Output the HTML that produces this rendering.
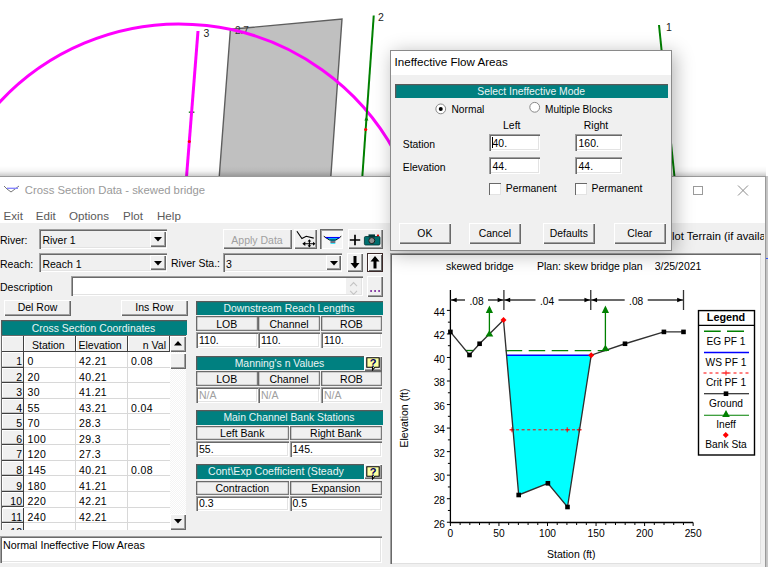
<!DOCTYPE html><html><head><meta charset="utf-8"><style>
html,body{margin:0;padding:0}
body{width:768px;height:567px;overflow:hidden;position:relative;background:#fff;font-family:"Liberation Sans", sans-serif}
.a{position:absolute;box-sizing:border-box}
.t{position:absolute;white-space:pre}
svg{position:absolute}
</style></head><body>
<svg style="left:0;top:0" width="768" height="180" viewBox="0 0 768 180">
<polygon points="230.4,29.3 342,19.1 330.8,177 219.2,177" fill="#c0c0c0" stroke="#5e5e5e" stroke-width="1.4"/>
<text x="235" y="34" font-family="Liberation Sans" font-size="10" fill="#333">2.7</text>
<path d="M-5,107.20 A245.66,245.66 0 0 1 395,152.17" fill="none" stroke="#ff00ff" stroke-width="3"/>
<line x1="188.8" y1="112.2" x2="194.4" y2="112.2" stroke="#1a801a" stroke-width="1.4"/>
<line x1="198" y1="31" x2="186.5" y2="177" stroke="#ff00ff" stroke-width="3"/>
<line x1="373.75" y1="15.5" x2="362.3" y2="177" stroke="#008000" stroke-width="2"/>
<line x1="659" y1="25" x2="674.5" y2="177" stroke="#008000" stroke-width="2"/>
<circle cx="365.7" cy="129.5" r="1.6" fill="#ff0000"/>
<circle cx="189.3" cy="141.5" r="1.5" fill="#ff0000"/>
<path d="M366.4,116.5 l2,4 h-4z" fill="#008000"/>
</svg>
<div class="t" style="left:203.4px;top:28.11px;font-size:10.5px;line-height:10.5px;color:#222;font-weight:400;">3</div>
<div class="t" style="left:378px;top:12.11px;font-size:10.5px;line-height:10.5px;color:#222;font-weight:400;">2</div>
<div class="t" style="left:666px;top:22.11px;font-size:10.5px;line-height:10.5px;color:#222;font-weight:400;">1</div>
<div class="a" style="left:0px;top:166px;width:766px;height:10px;background:linear-gradient(rgba(0,0,0,0), rgba(0,0,0,0.04) 50%, rgba(0,0,0,0.2));"></div>
<div class="a" style="left:766px;top:176px;width:10px;height:391px;background:linear-gradient(90deg,rgba(0,0,0,0.25),rgba(0,0,0,0.02));"></div>
<div class="a" style="left:-1px;top:176px;width:767px;height:404px;background:#f0f0f0;border:1px solid #9a9a9a;"></div>
<div class="a" style="left:0px;top:177px;width:765px;height:46.400000000000006px;background:#fff;"></div>
<svg style="left:3px;top:185px" width="17" height="10" viewBox="0 0 17 10">
<polyline points="1,1 4,4 8,7 12,4 16,1" fill="none" stroke="#777" stroke-width="1"/>
<line x1="4" y1="3.3" x2="15" y2="3.3" stroke="#8888ff" stroke-width="1.4"/>
</svg>
<div class="t" style="left:24.8px;top:185.43px;font-size:11.3px;line-height:11.3px;color:#9a9a9a;font-weight:400;">Cross Section Data - skewed bridge</div>
<div class="a" style="left:693px;top:186px;width:10px;height:9px;border:1px solid #9a9a9a;"></div>
<svg style="left:737px;top:185px" width="12" height="11" viewBox="0 0 12 11">
<path d="M1,0.5 L11,10.5 M11,0.5 L1,10.5" stroke="#8a8a8a" stroke-width="1"/></svg>
<div class="t" style="left:3.6px;top:209.68px;font-size:11.6px;line-height:11.6px;color:#5a5a5a;font-weight:400;">Exit</div>
<div class="t" style="left:35.8px;top:209.68px;font-size:11.6px;line-height:11.6px;color:#5a5a5a;font-weight:400;">Edit</div>
<div class="t" style="left:69px;top:209.68px;font-size:11.6px;line-height:11.6px;color:#5a5a5a;font-weight:400;">Options</div>
<div class="t" style="left:123px;top:209.68px;font-size:11.6px;line-height:11.6px;color:#5a5a5a;font-weight:400;">Plot</div>
<div class="t" style="left:157px;top:209.68px;font-size:11.6px;line-height:11.6px;color:#5a5a5a;font-weight:400;">Help</div>
<div class="t" style="left:0px;top:235.11px;font-size:10.5px;line-height:10.5px;color:#000;font-weight:400;">River:</div>
<div class="a" style="left:39px;top:229px;width:128px;height:20px;background:#f0f0f0;box-shadow:inset 1px 1px #a0a0a0, inset 2px 2px #696969, inset -1px -1px #fff, inset -2px -2px #e3e3e3;"></div>
<div class="t" style="left:42.4px;top:235.11px;font-size:10.5px;line-height:10.5px;color:#000;font-weight:400;">River 1</div>
<div class="a" style="left:150px;top:231px;width:16px;height:16px;background:#f0f0f0;box-shadow:inset 1px 1px #fff, inset -1px -1px #696969, inset -2px -2px #a0a0a0;"></div>
<svg style="left:154.0px;top:237.0px" width="8" height="5"><path d="M0,0 H8 L4,4.5z" fill="#000"/></svg>
<div class="t" style="left:0px;top:258.61px;font-size:10.5px;line-height:10.5px;color:#000;font-weight:400;">Reach:</div>
<div class="a" style="left:39px;top:253px;width:128px;height:19px;background:#f0f0f0;box-shadow:inset 1px 1px #a0a0a0, inset 2px 2px #696969, inset -1px -1px #fff, inset -2px -2px #e3e3e3;"></div>
<div class="t" style="left:42.4px;top:258.61px;font-size:10.5px;line-height:10.5px;color:#000;font-weight:400;">Reach 1</div>
<div class="a" style="left:150px;top:255px;width:16px;height:15px;background:#f0f0f0;box-shadow:inset 1px 1px #fff, inset -1px -1px #696969, inset -2px -2px #a0a0a0;"></div>
<svg style="left:154.0px;top:260.5px" width="8" height="5"><path d="M0,0 H8 L4,4.5z" fill="#000"/></svg>
<div class="t" style="left:171px;top:257.91px;font-size:10.5px;line-height:10.5px;color:#000;font-weight:400;">River Sta.:</div>
<div class="a" style="left:222.5px;top:253px;width:119.5px;height:19px;background:#f0f0f0;box-shadow:inset 1px 1px #a0a0a0, inset 2px 2px #696969, inset -1px -1px #fff, inset -2px -2px #e3e3e3;"></div>
<div class="t" style="left:226px;top:258.61px;font-size:10.5px;line-height:10.5px;color:#000;font-weight:400;">3</div>
<div class="a" style="left:326px;top:255px;width:15px;height:15px;background:#f0f0f0;box-shadow:inset 1px 1px #fff, inset -1px -1px #696969, inset -2px -2px #a0a0a0;"></div>
<svg style="left:329.5px;top:260.5px" width="8" height="5"><path d="M0,0 H8 L4,4.5z" fill="#000"/></svg>
<div class="a" style="left:222.5px;top:229px;width:69.0px;height:20px;background:#f0f0f0;box-shadow:inset 1px 1px #fff, inset -1px -1px #696969, inset -2px -2px #a0a0a0;"></div>
<div class="t" style="left:107px;width:300px;text-align:center;top:234.51px;font-size:10.5px;line-height:10.5px;color:#a0a0a0;font-weight:400;">Apply Data</div>
<div class="a" style="left:294px;top:229px;width:23px;height:20px;background:#f0f0f0;box-shadow:inset 1px 1px #fff, inset -1px -1px #696969, inset -2px -2px #a0a0a0;"></div>
<svg style="left:290px;top:225px" width="30" height="25" viewBox="290 225 30 25"><polyline points="296.9,231.25 301.9,238.5 306.25,236.25 313.75,238.1" fill="none" stroke="#000" stroke-width="1.1"/><path d="M304,243.75 H314 M309.4,240 V247" stroke="#000" stroke-width="1.1"/><path d="M302.3,243.75 l3,-2.2 v4.4z M315.5,243.75 l-2.5,-2 v4z M309.4,239.3 l-1.8,2.2 h3.6z M309.4,247.5 l-1.8,-2.2 h3.6z" fill="#000"/></svg>
<div class="a" style="left:320px;top:229px;width:23px;height:20px;background:#f6f6f6;box-shadow:inset 1px 1px #696969, inset 2px 2px #a0a0a0, inset -1px -1px #fff;"></div>
<svg style="left:320px;top:229px" width="23" height="20" viewBox="320 229 23 20"><path d="M325.6,237.5 L329.5,240 H330.5 V243.7 H335.3 V240 H336 L340,237.5z" fill="#00e0ff"/><path d="M330.5,242 H335.3" stroke="#e00000" stroke-width="1"/><polyline points="323.75,236.25 329.5,240 336,240 341.25,236.25" fill="none" stroke="#000" stroke-width="1"/><line x1="325.6" y1="237.6" x2="340" y2="237.6" stroke="#0000ff" stroke-width="1.3"/></svg>
<div class="a" style="left:347.5px;top:229px;width:35.5px;height:20px;background:#f0f0f0;box-shadow:inset 1px 1px #fff, inset -1px -1px #696969, inset -2px -2px #a0a0a0;"></div>
<svg style="left:347px;top:229px" width="36" height="20" viewBox="347 229 36 20"><path d="M355,234.8 V245.2 M349.8,240 H360.2" stroke="#000" stroke-width="1.7"/><rect x="364.4" y="236.5" width="15.6" height="8.5" rx="1.2" fill="#007070" stroke="#003030" stroke-width="0.8"/><rect x="368.5" y="234.4" width="6.5" height="3" fill="#003a3a"/><circle cx="371.8" cy="240.6" r="3" fill="#909090" stroke="#202020" stroke-width="1"/><rect x="377" y="234.6" width="2" height="1.5" fill="#e00000"/></svg>
<div class="a" style="left:347px;top:253px;width:16px;height:19px;background:#f0f0f0;box-shadow:inset 1px 1px #fff, inset -1px -1px #696969, inset -2px -2px #a0a0a0;"></div>
<svg style="left:350px;top:256px" width="10" height="13" viewBox="0 0 10 13"><path d="M3.5,0 H6.5 V7 H9.5 L5,12.5 L0.5,7 H3.5z" fill="#000"/></svg>
<div class="a" style="left:366.5px;top:253px;width:16.5px;height:19px;background:#f0f0f0;border:1px solid #3c2a2a;box-shadow:inset 1px 1px #fff, inset -1px -1px #696969;"></div>
<svg style="left:370px;top:256px" width="10" height="13" viewBox="0 0 10 13"><path d="M3.5,12.5 H6.5 V5.5 H9.5 L5,0 L0.5,5.5 H3.5z" fill="#000"/></svg>
<div class="t" style="left:0px;top:282.11px;font-size:10.5px;line-height:10.5px;color:#000;font-weight:400;">Description</div>
<div class="a" style="left:70.5px;top:276px;width:292.5px;height:19.5px;background:#fff;box-shadow:inset 1px 1px #a0a0a0, inset 2px 2px #696969, inset -1px -1px #fff, inset -2px -2px #e3e3e3;"></div>
<div class="a" style="left:346.4px;top:278px;width:15.100000000000023px;height:16px;background:#f0f0f0;"></div>
<svg style="left:346px;top:278px" width="16" height="17" viewBox="346 278 16 17"><path d="M350.2,286.2 L353.6,282.6 L357,286.2 M350.2,290.8 L353.6,294.4 L357,290.8" fill="none" stroke="#c4c4c4" stroke-width="1.1"/></svg>
<div class="a" style="left:367px;top:276px;width:16px;height:20.5px;background:#f0f0f0;box-shadow:inset 1px 1px #fff, inset -1px -1px #696969, inset -2px -2px #a0a0a0;"></div>
<svg style="left:367px;top:276px" width="16" height="20" viewBox="367 276 16 20"><rect x="370.3" y="290" width="1.6" height="2" fill="#8030a0"/><rect x="374.3" y="290" width="1.6" height="2" fill="#8030a0"/><rect x="378.3" y="290" width="1.6" height="2" fill="#8030a0"/></svg>
<div class="a" style="left:4px;top:300px;width:67px;height:16px;background:#f0f0f0;box-shadow:inset 1px 1px #fff, inset -1px -1px #696969, inset -2px -2px #a0a0a0;"></div>
<div class="t" style="left:-112.5px;width:300px;text-align:center;top:302.41px;font-size:10.5px;line-height:10.5px;color:#000;font-weight:400;">Del Row</div>
<div class="a" style="left:121px;top:300px;width:66.5px;height:16px;background:#f0f0f0;box-shadow:inset 1px 1px #fff, inset -1px -1px #696969, inset -2px -2px #a0a0a0;"></div>
<div class="t" style="left:4.25px;width:300px;text-align:center;top:302.41px;font-size:10.5px;line-height:10.5px;color:#000;font-weight:400;">Ins Row</div>
<div class="a" style="left:1px;top:320px;width:185.5px;height:15.0px;background:#008080;box-shadow:inset 1.3px 1.3px #5a5a5a;"></div>
<div class="t" style="left:-56.5px;width:300px;text-align:center;top:323.54px;font-size:10.4px;line-height:10.4px;color:#eaf4f4;font-weight:400;">Cross Section Coordinates</div>
<div class="a" style="left:1px;top:334.5px;width:185px;height:195.5px;background:#fff;box-shadow:inset 1px 1px #696969, inset 2px 2px #a0a0a0;"></div>
<div class="a" style="left:2px;top:336px;width:22px;height:16px;background:#f0f0f0;box-shadow:inset -1px -1px #404040, inset 1px 1px #fff;"></div>
<div class="a" style="left:24px;top:336px;width:51.5px;height:16px;background:#f0f0f0;box-shadow:inset -1px -1px #404040, inset 1px 1px #fff;"></div>
<div class="t" style="left:32px;top:339.61px;font-size:10.5px;line-height:10.5px;color:#000;font-weight:400;">Station</div>
<div class="a" style="left:75.5px;top:336px;width:52.0px;height:16px;background:#f0f0f0;box-shadow:inset -1px -1px #404040, inset 1px 1px #fff;"></div>
<div class="t" style="left:78.5px;top:339.61px;font-size:10.5px;line-height:10.5px;color:#000;font-weight:400;">Elevation</div>
<div class="a" style="left:127.5px;top:336px;width:42.5px;height:16px;background:#f0f0f0;box-shadow:inset -1px -1px #404040, inset 1px 1px #fff;"></div>
<div class="t" style="left:-134px;width:300px;text-align:right;top:339.61px;font-size:10.5px;line-height:10.5px;color:#000;font-weight:400;">n Val</div>
<div class="a" style="left:0;top:352px;width:186px;height:178px;overflow:hidden">
<div class="a" style="left:2px;top:0.0px;width:22px;height:15.55px;background:#f0f0f0;box-shadow:inset -1px -1.3px #404040, inset 1px 1px #fff;"></div>
<div class="t" style="left:-278px;width:300px;text-align:right;top:4.11px;font-size:10.5px;line-height:10.5px;color:#000;font-weight:400;">1</div>
<div class="a" style="left:24px;top:14.55px;width:146px;height:1.0px;background:#d8d8d8;"></div>
<div class="a" style="left:74.5px;top:0.0px;width:1.0px;height:15.55px;background:#d8d8d8;"></div>
<div class="a" style="left:126.5px;top:0.0px;width:1.0px;height:15.55px;background:#d8d8d8;"></div>
<div class="t" style="left:27.5px;top:4.11px;font-size:10.5px;line-height:10.5px;color:#000;font-weight:400;letter-spacing:0.35px">0</div>
<div class="t" style="left:79.0px;top:4.11px;font-size:10.5px;line-height:10.5px;color:#000;font-weight:400;letter-spacing:0.35px">42.21</div>
<div class="t" style="left:131.0px;top:4.11px;font-size:10.5px;line-height:10.5px;color:#000;font-weight:400;letter-spacing:0.35px">0.08</div>
<div class="a" style="left:2px;top:15.55px;width:22px;height:15.55px;background:#f0f0f0;box-shadow:inset -1px -1.3px #404040, inset 1px 1px #fff;"></div>
<div class="t" style="left:-278px;width:300px;text-align:right;top:19.66px;font-size:10.5px;line-height:10.5px;color:#000;font-weight:400;">2</div>
<div class="a" style="left:24px;top:30.1px;width:146px;height:1.0px;background:#d8d8d8;"></div>
<div class="a" style="left:74.5px;top:15.55px;width:1.0px;height:15.55px;background:#d8d8d8;"></div>
<div class="a" style="left:126.5px;top:15.55px;width:1.0px;height:15.55px;background:#d8d8d8;"></div>
<div class="t" style="left:27.5px;top:19.66px;font-size:10.5px;line-height:10.5px;color:#000;font-weight:400;letter-spacing:0.35px">20</div>
<div class="t" style="left:79.0px;top:19.66px;font-size:10.5px;line-height:10.5px;color:#000;font-weight:400;letter-spacing:0.35px">40.21</div>
<div class="a" style="left:2px;top:31.1px;width:22px;height:15.550000000000004px;background:#f0f0f0;box-shadow:inset -1px -1.3px #404040, inset 1px 1px #fff;"></div>
<div class="t" style="left:-278px;width:300px;text-align:right;top:35.21px;font-size:10.5px;line-height:10.5px;color:#000;font-weight:400;">3</div>
<div class="a" style="left:24px;top:45.650000000000006px;width:146px;height:1.0px;background:#d8d8d8;"></div>
<div class="a" style="left:74.5px;top:31.1px;width:1.0px;height:15.550000000000004px;background:#d8d8d8;"></div>
<div class="a" style="left:126.5px;top:31.1px;width:1.0px;height:15.550000000000004px;background:#d8d8d8;"></div>
<div class="t" style="left:27.5px;top:35.21px;font-size:10.5px;line-height:10.5px;color:#000;font-weight:400;letter-spacing:0.35px">30</div>
<div class="t" style="left:79.0px;top:35.21px;font-size:10.5px;line-height:10.5px;color:#000;font-weight:400;letter-spacing:0.35px">41.21</div>
<div class="a" style="left:2px;top:46.650000000000006px;width:22px;height:15.549999999999997px;background:#f0f0f0;box-shadow:inset -1px -1.3px #404040, inset 1px 1px #fff;"></div>
<div class="t" style="left:-278px;width:300px;text-align:right;top:50.76px;font-size:10.5px;line-height:10.5px;color:#000;font-weight:400;">4</div>
<div class="a" style="left:24px;top:61.2px;width:146px;height:1.0px;background:#d8d8d8;"></div>
<div class="a" style="left:74.5px;top:46.650000000000006px;width:1.0px;height:15.549999999999997px;background:#d8d8d8;"></div>
<div class="a" style="left:126.5px;top:46.650000000000006px;width:1.0px;height:15.549999999999997px;background:#d8d8d8;"></div>
<div class="t" style="left:27.5px;top:50.76px;font-size:10.5px;line-height:10.5px;color:#000;font-weight:400;letter-spacing:0.35px">55</div>
<div class="t" style="left:79.0px;top:50.76px;font-size:10.5px;line-height:10.5px;color:#000;font-weight:400;letter-spacing:0.35px">43.21</div>
<div class="t" style="left:131.0px;top:50.76px;font-size:10.5px;line-height:10.5px;color:#000;font-weight:400;letter-spacing:0.35px">0.04</div>
<div class="a" style="left:2px;top:62.2px;width:22px;height:15.549999999999997px;background:#f0f0f0;box-shadow:inset -1px -1.3px #404040, inset 1px 1px #fff;"></div>
<div class="t" style="left:-278px;width:300px;text-align:right;top:66.31px;font-size:10.5px;line-height:10.5px;color:#000;font-weight:400;">5</div>
<div class="a" style="left:24px;top:76.75px;width:146px;height:1.0px;background:#d8d8d8;"></div>
<div class="a" style="left:74.5px;top:62.2px;width:1.0px;height:15.549999999999997px;background:#d8d8d8;"></div>
<div class="a" style="left:126.5px;top:62.2px;width:1.0px;height:15.549999999999997px;background:#d8d8d8;"></div>
<div class="t" style="left:27.5px;top:66.31px;font-size:10.5px;line-height:10.5px;color:#000;font-weight:400;letter-spacing:0.35px">70</div>
<div class="t" style="left:79.0px;top:66.31px;font-size:10.5px;line-height:10.5px;color:#000;font-weight:400;letter-spacing:0.35px">28.3</div>
<div class="a" style="left:2px;top:77.75px;width:22px;height:15.549999999999997px;background:#f0f0f0;box-shadow:inset -1px -1.3px #404040, inset 1px 1px #fff;"></div>
<div class="t" style="left:-278px;width:300px;text-align:right;top:81.86px;font-size:10.5px;line-height:10.5px;color:#000;font-weight:400;">6</div>
<div class="a" style="left:24px;top:92.3px;width:146px;height:1.0px;background:#d8d8d8;"></div>
<div class="a" style="left:74.5px;top:77.75px;width:1.0px;height:15.549999999999997px;background:#d8d8d8;"></div>
<div class="a" style="left:126.5px;top:77.75px;width:1.0px;height:15.549999999999997px;background:#d8d8d8;"></div>
<div class="t" style="left:27.5px;top:81.86px;font-size:10.5px;line-height:10.5px;color:#000;font-weight:400;letter-spacing:0.35px">100</div>
<div class="t" style="left:79.0px;top:81.86px;font-size:10.5px;line-height:10.5px;color:#000;font-weight:400;letter-spacing:0.35px">29.3</div>
<div class="a" style="left:2px;top:93.30000000000001px;width:22px;height:15.549999999999997px;background:#f0f0f0;box-shadow:inset -1px -1.3px #404040, inset 1px 1px #fff;"></div>
<div class="t" style="left:-278px;width:300px;text-align:right;top:97.41px;font-size:10.5px;line-height:10.5px;color:#000;font-weight:400;">7</div>
<div class="a" style="left:24px;top:107.85000000000001px;width:146px;height:1.0px;background:#d8d8d8;"></div>
<div class="a" style="left:74.5px;top:93.30000000000001px;width:1.0px;height:15.549999999999997px;background:#d8d8d8;"></div>
<div class="a" style="left:126.5px;top:93.30000000000001px;width:1.0px;height:15.549999999999997px;background:#d8d8d8;"></div>
<div class="t" style="left:27.5px;top:97.41px;font-size:10.5px;line-height:10.5px;color:#000;font-weight:400;letter-spacing:0.35px">120</div>
<div class="t" style="left:79.0px;top:97.41px;font-size:10.5px;line-height:10.5px;color:#000;font-weight:400;letter-spacing:0.35px">27.3</div>
<div class="a" style="left:2px;top:108.85000000000001px;width:22px;height:15.549999999999997px;background:#f0f0f0;box-shadow:inset -1px -1.3px #404040, inset 1px 1px #fff;"></div>
<div class="t" style="left:-278px;width:300px;text-align:right;top:112.96px;font-size:10.5px;line-height:10.5px;color:#000;font-weight:400;">8</div>
<div class="a" style="left:24px;top:123.4px;width:146px;height:1.0px;background:#d8d8d8;"></div>
<div class="a" style="left:74.5px;top:108.85000000000001px;width:1.0px;height:15.549999999999997px;background:#d8d8d8;"></div>
<div class="a" style="left:126.5px;top:108.85000000000001px;width:1.0px;height:15.549999999999997px;background:#d8d8d8;"></div>
<div class="t" style="left:27.5px;top:112.96px;font-size:10.5px;line-height:10.5px;color:#000;font-weight:400;letter-spacing:0.35px">145</div>
<div class="t" style="left:79.0px;top:112.96px;font-size:10.5px;line-height:10.5px;color:#000;font-weight:400;letter-spacing:0.35px">40.21</div>
<div class="t" style="left:131.0px;top:112.96px;font-size:10.5px;line-height:10.5px;color:#000;font-weight:400;letter-spacing:0.35px">0.08</div>
<div class="a" style="left:2px;top:124.4px;width:22px;height:15.550000000000011px;background:#f0f0f0;box-shadow:inset -1px -1.3px #404040, inset 1px 1px #fff;"></div>
<div class="t" style="left:-278px;width:300px;text-align:right;top:128.51px;font-size:10.5px;line-height:10.5px;color:#000;font-weight:400;">9</div>
<div class="a" style="left:24px;top:138.95000000000002px;width:146px;height:1.0px;background:#d8d8d8;"></div>
<div class="a" style="left:74.5px;top:124.4px;width:1.0px;height:15.550000000000011px;background:#d8d8d8;"></div>
<div class="a" style="left:126.5px;top:124.4px;width:1.0px;height:15.550000000000011px;background:#d8d8d8;"></div>
<div class="t" style="left:27.5px;top:128.51px;font-size:10.5px;line-height:10.5px;color:#000;font-weight:400;letter-spacing:0.35px">180</div>
<div class="t" style="left:79.0px;top:128.51px;font-size:10.5px;line-height:10.5px;color:#000;font-weight:400;letter-spacing:0.35px">41.21</div>
<div class="a" style="left:2px;top:139.95000000000002px;width:22px;height:15.550000000000011px;background:#f0f0f0;box-shadow:inset -1px -1.3px #404040, inset 1px 1px #fff;"></div>
<div class="t" style="left:-278px;width:300px;text-align:right;top:144.06px;font-size:10.5px;line-height:10.5px;color:#000;font-weight:400;">10</div>
<div class="a" style="left:24px;top:154.50000000000003px;width:146px;height:1.0px;background:#d8d8d8;"></div>
<div class="a" style="left:74.5px;top:139.95000000000002px;width:1.0px;height:15.550000000000011px;background:#d8d8d8;"></div>
<div class="a" style="left:126.5px;top:139.95000000000002px;width:1.0px;height:15.550000000000011px;background:#d8d8d8;"></div>
<div class="t" style="left:27.5px;top:144.06px;font-size:10.5px;line-height:10.5px;color:#000;font-weight:400;letter-spacing:0.35px">220</div>
<div class="t" style="left:79.0px;top:144.06px;font-size:10.5px;line-height:10.5px;color:#000;font-weight:400;letter-spacing:0.35px">42.21</div>
<div class="a" style="left:2px;top:155.5px;width:22px;height:15.550000000000011px;background:#f0f0f0;box-shadow:inset -1px -1.3px #404040, inset 1px 1px #fff;"></div>
<div class="t" style="left:-278px;width:300px;text-align:right;top:159.61px;font-size:10.5px;line-height:10.5px;color:#000;font-weight:400;">11</div>
<div class="a" style="left:24px;top:170.05px;width:146px;height:1.0px;background:#d8d8d8;"></div>
<div class="a" style="left:74.5px;top:155.5px;width:1.0px;height:15.550000000000011px;background:#d8d8d8;"></div>
<div class="a" style="left:126.5px;top:155.5px;width:1.0px;height:15.550000000000011px;background:#d8d8d8;"></div>
<div class="t" style="left:27.5px;top:159.61px;font-size:10.5px;line-height:10.5px;color:#000;font-weight:400;letter-spacing:0.35px">240</div>
<div class="t" style="left:79.0px;top:159.61px;font-size:10.5px;line-height:10.5px;color:#000;font-weight:400;letter-spacing:0.35px">42.21</div>
<div class="a" style="left:2px;top:171.05px;width:22px;height:15.550000000000011px;background:#f0f0f0;box-shadow:inset -1px -1.3px #404040, inset 1px 1px #fff;"></div>
<div class="t" style="left:-278px;width:300px;text-align:right;top:175.16px;font-size:10.5px;line-height:10.5px;color:#000;font-weight:400;">12</div>
<div class="a" style="left:24px;top:185.60000000000002px;width:146px;height:1.0px;background:#d8d8d8;"></div>
<div class="a" style="left:74.5px;top:171.05px;width:1.0px;height:15.550000000000011px;background:#d8d8d8;"></div>
<div class="a" style="left:126.5px;top:171.05px;width:1.0px;height:15.550000000000011px;background:#d8d8d8;"></div>
</div>
<div class="a" style="left:170px;top:352px;width:16px;height:178px;background:repeating-conic-gradient(#f4f4f4 0 25%, #fff 0 50%) 0 0/2px 2px;"></div>
<div class="a" style="left:170px;top:336px;width:16px;height:16px;background:#f0f0f0;box-shadow:inset 1px 1px #fff, inset -1px -1px #696969, inset -2px -2px #a0a0a0;"></div>
<svg style="left:174px;top:341px" width="8" height="5"><path d="M0,4.5 H8 L4,0z" fill="#000"/></svg>
<div class="a" style="left:170px;top:352.5px;width:16px;height:16.5px;background:#f0f0f0;box-shadow:inset 1px 1px #fff, inset -1px -1px #696969, inset -2px -2px #a0a0a0;"></div>
<div class="a" style="left:170px;top:513.5px;width:16px;height:16.5px;background:#f0f0f0;box-shadow:inset 1px 1px #fff, inset -1px -1px #696969, inset -2px -2px #a0a0a0;"></div>
<svg style="left:174px;top:519px" width="8" height="5"><path d="M0,0 H8 L4,4.5z" fill="#000"/></svg>
<div class="a" style="left:0px;top:536.3px;width:382.4px;height:26.700000000000045px;background:#fff;box-shadow:inset 1px 1px #a0a0a0, inset 2px 2px #696969, inset -1px -1px #fff, inset -2px -2px #e3e3e3;"></div>
<div class="t" style="left:3px;top:540.44px;font-size:10.7px;line-height:10.7px;color:#000;font-weight:400;">Normal Ineffective Flow Areas</div>
<div class="a" style="left:196px;top:300.5px;width:186.5px;height:14.0px;background:#008080;box-shadow:inset 1.3px 1.3px #5a5a5a;"></div>
<div class="t" style="left:139.0px;width:300px;text-align:center;top:303.54px;font-size:10.4px;line-height:10.4px;color:#eaf4f4;font-weight:400;">Downstream Reach Lengths</div>
<div class="a" style="left:196px;top:316px;width:61.5px;height:14.5px;background:#f0f0f0;box-shadow:inset 1.3px 1.3px #6a6a6a, inset -1.2px -1.2px #7a7a7a;"></div>
<div class="t" style="left:76.75px;width:300px;text-align:center;top:318.69px;font-size:10.5px;line-height:10.5px;color:#000;font-weight:400;">LOB</div>
<div class="a" style="left:196px;top:332px;width:61.5px;height:16px;background:#fff;box-shadow:inset 1px 1px #a0a0a0, inset 2px 2px #696969, inset -1px -1px #fff, inset -2px -2px #e3e3e3;"></div>
<div class="t" style="left:199px;top:334.94px;font-size:10.5px;line-height:10.5px;color:#000;font-weight:400;">110.</div>
<div class="a" style="left:258px;top:316px;width:62px;height:14.5px;background:#f0f0f0;box-shadow:inset 1.3px 1.3px #6a6a6a, inset -1.2px -1.2px #7a7a7a;"></div>
<div class="t" style="left:139.0px;width:300px;text-align:center;top:318.69px;font-size:10.5px;line-height:10.5px;color:#000;font-weight:400;">Channel</div>
<div class="a" style="left:258px;top:332px;width:62px;height:16px;background:#fff;box-shadow:inset 1px 1px #a0a0a0, inset 2px 2px #696969, inset -1px -1px #fff, inset -2px -2px #e3e3e3;"></div>
<div class="t" style="left:261px;top:334.94px;font-size:10.5px;line-height:10.5px;color:#000;font-weight:400;">110.</div>
<div class="a" style="left:321px;top:316px;width:61px;height:14.5px;background:#f0f0f0;box-shadow:inset 1.3px 1.3px #6a6a6a, inset -1.2px -1.2px #7a7a7a;"></div>
<div class="t" style="left:201.5px;width:300px;text-align:center;top:318.69px;font-size:10.5px;line-height:10.5px;color:#000;font-weight:400;">ROB</div>
<div class="a" style="left:321px;top:332px;width:61px;height:16px;background:#fff;box-shadow:inset 1px 1px #a0a0a0, inset 2px 2px #696969, inset -1px -1px #fff, inset -2px -2px #e3e3e3;"></div>
<div class="t" style="left:324px;top:334.94px;font-size:10.5px;line-height:10.5px;color:#000;font-weight:400;">110.</div>
<div class="a" style="left:196px;top:355.5px;width:167.5px;height:14.5px;background:#008080;box-shadow:inset 1.3px 1.3px #5a5a5a;"></div>
<div class="t" style="left:129.5px;width:300px;text-align:center;top:358.79px;font-size:10.4px;line-height:10.4px;color:#eaf4f4;font-weight:400;">Manning&#39;s n Values</div>
<div class="a" style="left:364px;top:355.5px;width:18px;height:15.0px;background:#f0f0f0;box-shadow:inset 1px 1px #fff, inset -1px -1px #696969, inset -2px -2px #a0a0a0;"></div>
<svg style="left:366px;top:357.0px" width="15" height="14" viewBox="0 0 15 14"><path d="M0.8,0.8 H13.2 V10.2 H9 L6.5,13 V10.2 H0.8z" fill="#ffffa0" stroke="#000" stroke-width="1.1"/><text x="7" y="9.6" font-size="11" font-weight="700" text-anchor="middle" fill="#000060" font-family="Liberation Sans">?</text></svg>
<div class="a" style="left:196px;top:371px;width:61.5px;height:14.5px;background:#f0f0f0;box-shadow:inset 1.3px 1.3px #6a6a6a, inset -1.2px -1.2px #7a7a7a;"></div>
<div class="t" style="left:76.75px;width:300px;text-align:center;top:373.69px;font-size:10.5px;line-height:10.5px;color:#000;font-weight:400;">LOB</div>
<div class="a" style="left:196px;top:387px;width:61.5px;height:15.5px;background:#fff;box-shadow:inset 1px 1px #a0a0a0, inset 2px 2px #696969, inset -1px -1px #fff, inset -2px -2px #e3e3e3;"></div>
<div class="t" style="left:199px;top:389.69px;font-size:10.5px;line-height:10.5px;color:#a0a0a0;font-weight:400;">N/A</div>
<div class="a" style="left:258px;top:371px;width:62px;height:14.5px;background:#f0f0f0;box-shadow:inset 1.3px 1.3px #6a6a6a, inset -1.2px -1.2px #7a7a7a;"></div>
<div class="t" style="left:139.0px;width:300px;text-align:center;top:373.69px;font-size:10.5px;line-height:10.5px;color:#000;font-weight:400;">Channel</div>
<div class="a" style="left:258px;top:387px;width:62px;height:15.5px;background:#fff;box-shadow:inset 1px 1px #a0a0a0, inset 2px 2px #696969, inset -1px -1px #fff, inset -2px -2px #e3e3e3;"></div>
<div class="t" style="left:261px;top:389.69px;font-size:10.5px;line-height:10.5px;color:#a0a0a0;font-weight:400;">N/A</div>
<div class="a" style="left:321px;top:371px;width:61px;height:14.5px;background:#f0f0f0;box-shadow:inset 1.3px 1.3px #6a6a6a, inset -1.2px -1.2px #7a7a7a;"></div>
<div class="t" style="left:201.5px;width:300px;text-align:center;top:373.69px;font-size:10.5px;line-height:10.5px;color:#000;font-weight:400;">ROB</div>
<div class="a" style="left:321px;top:387px;width:61px;height:15.5px;background:#fff;box-shadow:inset 1px 1px #a0a0a0, inset 2px 2px #696969, inset -1px -1px #fff, inset -2px -2px #e3e3e3;"></div>
<div class="t" style="left:324px;top:389.69px;font-size:10.5px;line-height:10.5px;color:#a0a0a0;font-weight:400;">N/A</div>
<div class="a" style="left:196px;top:410px;width:186.5px;height:14.5px;background:#008080;box-shadow:inset 1.3px 1.3px #5a5a5a;"></div>
<div class="t" style="left:139.0px;width:300px;text-align:center;top:413.29px;font-size:10.4px;line-height:10.4px;color:#eaf4f4;font-weight:400;">Main Channel Bank Stations</div>
<div class="a" style="left:196px;top:425.5px;width:92.5px;height:14.0px;background:#f0f0f0;box-shadow:inset 1.3px 1.3px #6a6a6a, inset -1.2px -1.2px #7a7a7a;"></div>
<div class="t" style="left:92.25px;width:300px;text-align:center;top:427.94px;font-size:10.5px;line-height:10.5px;color:#000;font-weight:400;">Left Bank</div>
<div class="a" style="left:196px;top:441px;width:92.5px;height:16px;background:#fff;box-shadow:inset 1px 1px #a0a0a0, inset 2px 2px #696969, inset -1px -1px #fff, inset -2px -2px #e3e3e3;"></div>
<div class="t" style="left:199px;top:443.94px;font-size:10.5px;line-height:10.5px;color:#000;font-weight:400;">55.</div>
<div class="a" style="left:289.5px;top:425.5px;width:92.5px;height:14.0px;background:#f0f0f0;box-shadow:inset 1.3px 1.3px #6a6a6a, inset -1.2px -1.2px #7a7a7a;"></div>
<div class="t" style="left:185.75px;width:300px;text-align:center;top:427.94px;font-size:10.5px;line-height:10.5px;color:#000;font-weight:400;">Right Bank</div>
<div class="a" style="left:289.5px;top:441px;width:92.5px;height:16px;background:#fff;box-shadow:inset 1px 1px #a0a0a0, inset 2px 2px #696969, inset -1px -1px #fff, inset -2px -2px #e3e3e3;"></div>
<div class="t" style="left:292.5px;top:443.94px;font-size:10.5px;line-height:10.5px;color:#000;font-weight:400;">145.</div>
<div class="a" style="left:196px;top:464px;width:167.5px;height:14.5px;background:#008080;box-shadow:inset 1.3px 1.3px #5a5a5a;"></div>
<div class="t" style="left:129.5px;width:300px;text-align:center;top:467.29px;font-size:10.4px;line-height:10.4px;color:#eaf4f4;font-weight:400;"></div>
<div class="t" style="left:208px;top:466.33px;font-size:10.6px;line-height:10.6px;color:#eaf4f4;font-weight:400;">Cont\Exp Coefficient (Steady</div>
<div class="a" style="left:364px;top:464px;width:18px;height:15px;background:#f0f0f0;box-shadow:inset 1px 1px #fff, inset -1px -1px #696969, inset -2px -2px #a0a0a0;"></div>
<svg style="left:366px;top:465.5px" width="15" height="14" viewBox="0 0 15 14"><path d="M0.8,0.8 H13.2 V10.2 H9 L6.5,13 V10.2 H0.8z" fill="#ffffa0" stroke="#000" stroke-width="1.1"/><text x="7" y="9.6" font-size="11" font-weight="700" text-anchor="middle" fill="#000060" font-family="Liberation Sans">?</text></svg>
<div class="a" style="left:196px;top:480.5px;width:92.5px;height:14.0px;background:#f0f0f0;box-shadow:inset 1.3px 1.3px #6a6a6a, inset -1.2px -1.2px #7a7a7a;"></div>
<div class="t" style="left:92.25px;width:300px;text-align:center;top:482.94px;font-size:10.5px;line-height:10.5px;color:#000;font-weight:400;">Contraction</div>
<div class="a" style="left:196px;top:496px;width:92.5px;height:15px;background:#fff;box-shadow:inset 1px 1px #a0a0a0, inset 2px 2px #696969, inset -1px -1px #fff, inset -2px -2px #e3e3e3;"></div>
<div class="t" style="left:199px;top:498.44px;font-size:10.5px;line-height:10.5px;color:#000;font-weight:400;">0.3</div>
<div class="a" style="left:289.5px;top:480.5px;width:92.5px;height:14.0px;background:#f0f0f0;box-shadow:inset 1.3px 1.3px #6a6a6a, inset -1.2px -1.2px #7a7a7a;"></div>
<div class="t" style="left:185.75px;width:300px;text-align:center;top:482.94px;font-size:10.5px;line-height:10.5px;color:#000;font-weight:400;">Expansion</div>
<div class="a" style="left:289.5px;top:496px;width:92.5px;height:15px;background:#fff;box-shadow:inset 1px 1px #a0a0a0, inset 2px 2px #696969, inset -1px -1px #fff, inset -2px -2px #e3e3e3;"></div>
<div class="t" style="left:292.5px;top:498.44px;font-size:10.5px;line-height:10.5px;color:#000;font-weight:400;">0.5</div>
<div class="a" style="left:672px;top:226px;width:92px;height:20px;overflow:hidden">
<div class="t" style="left:0px;top:5.12px;font-size:11.2px;line-height:11.2px;color:#000;font-weight:400;">lot Terrain (if availab</div>
</div>
<div class="a" style="left:390.4px;top:253px;width:370.6px;height:310.5px;background:#fff;box-shadow:inset 1px 1px #a0a0a0, inset 2px 2px #696969, inset -1px -1px #e0e0e0;"></div>
<svg style="left:391px;top:253px" width="370" height="310" viewBox="391 253 370 310">
<defs><linearGradient id="sh" x1="0" y1="0" x2="0" y2="1"><stop offset="0" stop-color="#000" stop-opacity="0.10"/><stop offset="1" stop-color="#000" stop-opacity="0"/></linearGradient></defs>
<path d="M450.4,290 V522.5 H693.1" fill="none" stroke="#000" stroke-width="1.3"/>
<line x1="446.9" y1="522.25" x2="450.4" y2="522.25" stroke="#000" stroke-width="1"/>
<line x1="447.9" y1="510.48" x2="450.4" y2="510.48" stroke="#000" stroke-width="1"/>
<line x1="446.9" y1="498.71" x2="450.4" y2="498.71" stroke="#000" stroke-width="1"/>
<line x1="447.9" y1="486.94" x2="450.4" y2="486.94" stroke="#000" stroke-width="1"/>
<line x1="446.9" y1="475.17" x2="450.4" y2="475.17" stroke="#000" stroke-width="1"/>
<line x1="447.9" y1="463.40" x2="450.4" y2="463.40" stroke="#000" stroke-width="1"/>
<line x1="446.9" y1="451.63" x2="450.4" y2="451.63" stroke="#000" stroke-width="1"/>
<line x1="447.9" y1="439.86" x2="450.4" y2="439.86" stroke="#000" stroke-width="1"/>
<line x1="446.9" y1="428.09" x2="450.4" y2="428.09" stroke="#000" stroke-width="1"/>
<line x1="447.9" y1="416.32" x2="450.4" y2="416.32" stroke="#000" stroke-width="1"/>
<line x1="446.9" y1="404.55" x2="450.4" y2="404.55" stroke="#000" stroke-width="1"/>
<line x1="447.9" y1="392.78" x2="450.4" y2="392.78" stroke="#000" stroke-width="1"/>
<line x1="446.9" y1="381.01" x2="450.4" y2="381.01" stroke="#000" stroke-width="1"/>
<line x1="447.9" y1="369.24" x2="450.4" y2="369.24" stroke="#000" stroke-width="1"/>
<line x1="446.9" y1="357.47" x2="450.4" y2="357.47" stroke="#000" stroke-width="1"/>
<line x1="447.9" y1="345.70" x2="450.4" y2="345.70" stroke="#000" stroke-width="1"/>
<line x1="446.9" y1="333.93" x2="450.4" y2="333.93" stroke="#000" stroke-width="1"/>
<line x1="447.9" y1="322.16" x2="450.4" y2="322.16" stroke="#000" stroke-width="1"/>
<line x1="446.9" y1="310.39" x2="450.4" y2="310.39" stroke="#000" stroke-width="1"/>
<line x1="450.40" y1="522.5" x2="450.40" y2="526.0" stroke="#000" stroke-width="1"/>
<line x1="460.11" y1="522.5" x2="460.11" y2="525.0" stroke="#000" stroke-width="1"/>
<line x1="469.82" y1="522.5" x2="469.82" y2="525.0" stroke="#000" stroke-width="1"/>
<line x1="479.53" y1="522.5" x2="479.53" y2="525.0" stroke="#000" stroke-width="1"/>
<line x1="489.24" y1="522.5" x2="489.24" y2="525.0" stroke="#000" stroke-width="1"/>
<line x1="498.95" y1="522.5" x2="498.95" y2="526.0" stroke="#000" stroke-width="1"/>
<line x1="508.66" y1="522.5" x2="508.66" y2="525.0" stroke="#000" stroke-width="1"/>
<line x1="518.37" y1="522.5" x2="518.37" y2="525.0" stroke="#000" stroke-width="1"/>
<line x1="528.08" y1="522.5" x2="528.08" y2="525.0" stroke="#000" stroke-width="1"/>
<line x1="537.79" y1="522.5" x2="537.79" y2="525.0" stroke="#000" stroke-width="1"/>
<line x1="547.50" y1="522.5" x2="547.50" y2="526.0" stroke="#000" stroke-width="1"/>
<line x1="557.21" y1="522.5" x2="557.21" y2="525.0" stroke="#000" stroke-width="1"/>
<line x1="566.92" y1="522.5" x2="566.92" y2="525.0" stroke="#000" stroke-width="1"/>
<line x1="576.63" y1="522.5" x2="576.63" y2="525.0" stroke="#000" stroke-width="1"/>
<line x1="586.34" y1="522.5" x2="586.34" y2="525.0" stroke="#000" stroke-width="1"/>
<line x1="596.05" y1="522.5" x2="596.05" y2="526.0" stroke="#000" stroke-width="1"/>
<line x1="605.76" y1="522.5" x2="605.76" y2="525.0" stroke="#000" stroke-width="1"/>
<line x1="615.47" y1="522.5" x2="615.47" y2="525.0" stroke="#000" stroke-width="1"/>
<line x1="625.18" y1="522.5" x2="625.18" y2="525.0" stroke="#000" stroke-width="1"/>
<line x1="634.89" y1="522.5" x2="634.89" y2="525.0" stroke="#000" stroke-width="1"/>
<line x1="644.60" y1="522.5" x2="644.60" y2="526.0" stroke="#000" stroke-width="1"/>
<line x1="654.31" y1="522.5" x2="654.31" y2="525.0" stroke="#000" stroke-width="1"/>
<line x1="664.02" y1="522.5" x2="664.02" y2="525.0" stroke="#000" stroke-width="1"/>
<line x1="673.73" y1="522.5" x2="673.73" y2="525.0" stroke="#000" stroke-width="1"/>
<line x1="683.44" y1="522.5" x2="683.44" y2="525.0" stroke="#000" stroke-width="1"/>
<line x1="693.15" y1="522.5" x2="693.15" y2="526.0" stroke="#000" stroke-width="1"/>
<polygon points="506.56,355.2 518.7,495 547.9,483.3 567.5,507 591.2,355.2" fill="#00ffff"/>
<line x1="505.7" y1="350.7" x2="607" y2="350.7" stroke="#008000" stroke-width="1.3" stroke-dasharray="16.5,6.5"/>
<line x1="465.6" y1="350.5" x2="473.7" y2="350.5" stroke="#008000" stroke-width="1.3"/>
<line x1="506.5" y1="355.2" x2="591.2" y2="355.2" stroke="#0000ff" stroke-width="1.5"/>
<line x1="510.4" y1="429.8" x2="581.6" y2="429.8" stroke="#ff0000" stroke-width="1" stroke-dasharray="3,2.6"/>
<path d="M509.5,429.8 h5 M512,427.3 v5" stroke="#ff0000" stroke-width="1"/>
<path d="M564.7,429.8 h5 M567.2,427.3 v5" stroke="#ff0000" stroke-width="1"/>
<path d="M576.7,429.8 h5 M579.2,427.3 v5" stroke="#ff0000" stroke-width="1"/>
<polyline points="450.4,331.9 469.5,355 479.6,343.75 503.5,320 518.7,495 547.9,483.3 567.5,507 591.2,355.2 625,343.75 663.9,331.9 683.5,331.9" fill="none" stroke="#303030" stroke-width="1.35"/>
<rect x="448.09999999999997" y="329.59999999999997" width="4.6" height="4.6" fill="#000"/>
<rect x="467.2" y="352.7" width="4.6" height="4.6" fill="#000"/>
<rect x="477.3" y="341.45" width="4.6" height="4.6" fill="#000"/>
<path d="M503.5,317 L506.5,320 L503.5,323 L500.5,320z" fill="#ff0000"/>
<rect x="516.4000000000001" y="492.7" width="4.6" height="4.6" fill="#000"/>
<rect x="545.6" y="481.0" width="4.6" height="4.6" fill="#000"/>
<rect x="565.2" y="504.7" width="4.6" height="4.6" fill="#000"/>
<path d="M591.2,352.2 L594.2,355.2 L591.2,358.2 L588.2,355.2z" fill="#ff0000"/>
<rect x="622.7" y="341.45" width="4.6" height="4.6" fill="#000"/>
<rect x="661.6" y="329.59999999999997" width="4.6" height="4.6" fill="#000"/>
<rect x="681.2" y="329.59999999999997" width="4.6" height="4.6" fill="#000"/>
<line x1="489.4" y1="336" x2="489.4" y2="308" stroke="#008000" stroke-width="1.3"/>
<path d="M489.4,305.6 L493.0,313 L485.79999999999995,313z" fill="#008000"/>
<path d="M489.4,330.2 L493.29999999999995,336.4 L485.5,336.4z" fill="#008000"/>
<line x1="605.4" y1="350.5" x2="605.4" y2="308" stroke="#008000" stroke-width="1.3"/>
<path d="M605.4,305.6 L609.0,313 L601.8,313z" fill="#008000"/>
<path d="M605.4,344.7 L609.3,350.9 L601.5,350.9z" fill="#008000"/>
<line x1="503.9" y1="290" x2="503.9" y2="310" stroke="#333" stroke-width="1.3"/>
<line x1="590.75" y1="290" x2="590.75" y2="310" stroke="#333" stroke-width="1.3"/>
<line x1="683.5" y1="290" x2="683.5" y2="310" stroke="#333" stroke-width="1.3"/>
<path d="M450.4,300 H465.0 M488.0,300 H503.9" stroke="#3a3a3a" stroke-width="1.3"/>
<path d="M451.2,300 l5.5,-2.3 v4.6z" fill="#000"/>
<path d="M503.09999999999997,300 l-5.5,-2.3 v4.6z" fill="#000"/>
<path d="M503.9,300 H535.5 M558.5,300 H590.75" stroke="#3a3a3a" stroke-width="1.3"/>
<path d="M504.7,300 l5.5,-2.3 v4.6z" fill="#000"/>
<path d="M589.95,300 l-5.5,-2.3 v4.6z" fill="#000"/>
<path d="M590.75,300 H624.7 M647.7,300 H683.5" stroke="#3a3a3a" stroke-width="1.3"/>
<path d="M591.55,300 l5.5,-2.3 v4.6z" fill="#000"/>
<path d="M682.7,300 l-5.5,-2.3 v4.6z" fill="#000"/>
</svg>
<div class="t" style="left:145px;width:300px;text-align:right;top:519.62px;font-size:10.2px;line-height:10.2px;color:#000;font-weight:400;">26</div>
<div class="t" style="left:145px;width:300px;text-align:right;top:496.08px;font-size:10.2px;line-height:10.2px;color:#000;font-weight:400;">28</div>
<div class="t" style="left:145px;width:300px;text-align:right;top:472.54px;font-size:10.2px;line-height:10.2px;color:#000;font-weight:400;">30</div>
<div class="t" style="left:145px;width:300px;text-align:right;top:449.00px;font-size:10.2px;line-height:10.2px;color:#000;font-weight:400;">32</div>
<div class="t" style="left:145px;width:300px;text-align:right;top:425.46px;font-size:10.2px;line-height:10.2px;color:#000;font-weight:400;">34</div>
<div class="t" style="left:145px;width:300px;text-align:right;top:401.92px;font-size:10.2px;line-height:10.2px;color:#000;font-weight:400;">36</div>
<div class="t" style="left:145px;width:300px;text-align:right;top:378.38px;font-size:10.2px;line-height:10.2px;color:#000;font-weight:400;">38</div>
<div class="t" style="left:145px;width:300px;text-align:right;top:354.84px;font-size:10.2px;line-height:10.2px;color:#000;font-weight:400;">40</div>
<div class="t" style="left:145px;width:300px;text-align:right;top:331.30px;font-size:10.2px;line-height:10.2px;color:#000;font-weight:400;">42</div>
<div class="t" style="left:145px;width:300px;text-align:right;top:307.76px;font-size:10.2px;line-height:10.2px;color:#000;font-weight:400;">44</div>
<div class="t" style="left:300.4px;width:300px;text-align:center;top:528.87px;font-size:10.2px;line-height:10.2px;color:#000;font-weight:400;">0</div>
<div class="t" style="left:348.95px;width:300px;text-align:center;top:528.87px;font-size:10.2px;line-height:10.2px;color:#000;font-weight:400;">50</div>
<div class="t" style="left:397.5px;width:300px;text-align:center;top:528.87px;font-size:10.2px;line-height:10.2px;color:#000;font-weight:400;">100</div>
<div class="t" style="left:446.04999999999995px;width:300px;text-align:center;top:528.87px;font-size:10.2px;line-height:10.2px;color:#000;font-weight:400;">150</div>
<div class="t" style="left:494.5999999999999px;width:300px;text-align:center;top:528.87px;font-size:10.2px;line-height:10.2px;color:#000;font-weight:400;">200</div>
<div class="t" style="left:543.15px;width:300px;text-align:center;top:528.87px;font-size:10.2px;line-height:10.2px;color:#000;font-weight:400;">250</div>
<div class="t" style="left:326.5px;width:300px;text-align:center;top:296.97px;font-size:10.2px;line-height:10.2px;color:#000;font-weight:400;">.08</div>
<div class="t" style="left:397px;width:300px;text-align:center;top:296.97px;font-size:10.2px;line-height:10.2px;color:#000;font-weight:400;">.04</div>
<div class="t" style="left:486.20000000000005px;width:300px;text-align:center;top:296.97px;font-size:10.2px;line-height:10.2px;color:#000;font-weight:400;">.08</div>
<div class="t" style="left:421.29999999999995px;width:300px;text-align:center;top:549.11px;font-size:10.5px;line-height:10.5px;color:#000;font-weight:400;">Station (ft)</div>
<div class="t" style="left:354px;top:411.5px;width:100px;text-align:center;font-size:10.5px;line-height:12px;transform:rotate(-90deg);transform-origin:50px 6px;">Elevation (ft)</div>
<div class="t" style="left:446px;top:261.11px;font-size:10.5px;line-height:10.5px;color:#000;font-weight:400;">skewed bridge</div>
<div class="t" style="left:537px;top:261.11px;font-size:10.5px;line-height:10.5px;color:#000;font-weight:400;">Plan: skew bridge plan</div>
<div class="t" style="left:654.7px;top:261.11px;font-size:10.5px;line-height:10.5px;color:#000;font-weight:400;">3/25/2021</div>
<div class="a" style="left:765.5px;top:258px;width:2.5px;height:1.3000000000000114px;background:#3050ff;"></div>
<svg style="left:697px;top:309px" width="60" height="148" viewBox="697 309 60 148"><rect x="698.5" y="310.6" width="56" height="144.4" fill="#fff" stroke="#000" stroke-width="1.4"/><line x1="698.5" y1="325.4" x2="754.5" y2="325.4" stroke="#000" stroke-width="1.2"/><path d="M704,331.25 H720.75 M727,331.25 H744" stroke="#008000" stroke-width="1.3"/><line x1="704" y1="352.5" x2="749" y2="352.5" stroke="#0000ff" stroke-width="1.5"/><line x1="703.5" y1="373" x2="749" y2="373" stroke="#ff0000" stroke-width="1" stroke-dasharray="3,3"/><path d="M723.5,373 h5 M726,370.5 v5" stroke="#ff0000" stroke-width="1"/><line x1="704" y1="393.75" x2="749" y2="393.75" stroke="#000" stroke-width="1.1"/><rect x="723.7" y="391.4" width="4.6" height="4.6" fill="#000"/><line x1="704" y1="415.25" x2="749" y2="415.25" stroke="#008000" stroke-width="1.2"/><path d="M726,410 L729.8,417 H722.2z" fill="#008000"/><path d="M725.75,432 L728.75,435 L725.75,438 L722.75,435z" fill="#ff0000"/></svg>
<div class="t" style="left:576px;width:300px;text-align:center;top:311.86px;font-size:10.8px;line-height:10.8px;color:#000;font-weight:700;">Legend</div>
<div class="t" style="left:576px;width:300px;text-align:center;top:336.97px;font-size:10.2px;line-height:10.2px;color:#000;font-weight:400;">EG PF 1</div>
<div class="t" style="left:576px;width:300px;text-align:center;top:357.62px;font-size:10.2px;line-height:10.2px;color:#000;font-weight:400;">WS PF 1</div>
<div class="t" style="left:576px;width:300px;text-align:center;top:378.37px;font-size:10.2px;line-height:10.2px;color:#000;font-weight:400;">Crit PF 1</div>
<div class="t" style="left:576px;width:300px;text-align:center;top:399.37px;font-size:10.2px;line-height:10.2px;color:#000;font-weight:400;">Ground</div>
<div class="t" style="left:576px;width:300px;text-align:center;top:420.12px;font-size:10.2px;line-height:10.2px;color:#000;font-weight:400;">Ineff</div>
<div class="t" style="left:576px;width:300px;text-align:center;top:440.12px;font-size:10.2px;line-height:10.2px;color:#000;font-weight:400;">Bank Sta</div>
<div class="a" style="left:390px;top:50px;width:282px;height:201px;background:#f0f0f0;border:1px solid #8a8a8a;box-shadow:3px 3px 18px rgba(0,0,0,0.3);"></div>
<div class="a" style="left:391px;top:51px;width:280px;height:24px;background:#fff;"></div>
<div class="t" style="left:394.6px;top:56.18px;font-size:11.6px;line-height:11.6px;color:#000;font-weight:400;">Ineffective Flow Areas</div>
<div class="a" style="left:395.25px;top:83.5px;width:272.45000000000005px;height:14.5px;background:#008080;box-shadow:inset 1.3px 1.3px #5a5a5a;"></div>
<div class="t" style="left:381.225px;width:300px;text-align:center;top:86.79px;font-size:10.4px;line-height:10.4px;color:#eaf4f4;font-weight:400;">Select Ineffective Mode</div>
<svg style="left:434px;top:102px" width="14" height="14" viewBox="0 0 14 14"><circle cx="6.75" cy="6.9" r="4.9" fill="#fff" stroke="#888" stroke-width="1"/><circle cx="6.75" cy="6.9" r="2" fill="#000"/></svg>
<div class="t" style="left:451.5px;top:105.17px;font-size:10.2px;line-height:10.2px;color:#000;font-weight:400;">Normal</div>
<svg style="left:528px;top:101px" width="14" height="14" viewBox="0 0 14 14"><circle cx="6.7" cy="6.3" r="4.9" fill="#fff" stroke="#888" stroke-width="1"/></svg>
<div class="t" style="left:545px;top:104.75px;font-size:10.1px;line-height:10.1px;color:#000;font-weight:400;">Multiple Blocks</div>
<div class="t" style="left:361.75px;width:300px;text-align:center;top:120.50px;font-size:10.4px;line-height:10.4px;color:#000;font-weight:400;">Left</div>
<div class="t" style="left:446px;width:300px;text-align:center;top:120.50px;font-size:10.4px;line-height:10.4px;color:#000;font-weight:400;">Right</div>
<div class="t" style="left:402.75px;top:139.50px;font-size:10.4px;line-height:10.4px;color:#000;font-weight:400;">Station</div>
<div class="t" style="left:402.75px;top:163.20px;font-size:10.4px;line-height:10.4px;color:#000;font-weight:400;">Elevation</div>
<div class="a" style="left:489px;top:134px;width:50.5px;height:17px;background:#fff;box-shadow:inset 1px 1px #a0a0a0, inset 2px 2px #696969, inset -1px -1px #fff, inset -2px -2px #e3e3e3;"></div>
<div class="t" style="left:492.6px;top:138.70px;font-size:10.4px;line-height:10.4px;color:#000;font-weight:400;">40.</div>
<div class="a" style="left:492px;top:137px;width:1px;height:11px;background:#000;"></div>
<div class="a" style="left:575px;top:134px;width:46.5px;height:17px;background:#fff;box-shadow:inset 1px 1px #a0a0a0, inset 2px 2px #696969, inset -1px -1px #fff, inset -2px -2px #e3e3e3;"></div>
<div class="t" style="left:578.6px;top:138.70px;font-size:10.4px;line-height:10.4px;color:#000;font-weight:400;">160.</div>
<div class="a" style="left:489px;top:157px;width:50.5px;height:17px;background:#fff;box-shadow:inset 1px 1px #a0a0a0, inset 2px 2px #696969, inset -1px -1px #fff, inset -2px -2px #e3e3e3;"></div>
<div class="t" style="left:492.6px;top:161.70px;font-size:10.4px;line-height:10.4px;color:#000;font-weight:400;">44.</div>
<div class="a" style="left:575px;top:157px;width:46.5px;height:17px;background:#fff;box-shadow:inset 1px 1px #a0a0a0, inset 2px 2px #696969, inset -1px -1px #fff, inset -2px -2px #e3e3e3;"></div>
<div class="t" style="left:578.6px;top:161.70px;font-size:10.4px;line-height:10.4px;color:#000;font-weight:400;">44.</div>
<div class="a" style="left:489px;top:183px;width:11.5px;height:11.5px;background:#fff;box-shadow:inset 1px 1px #696969, inset -1px -1px #e3e3e3;"></div>
<div class="a" style="left:575px;top:183px;width:11.5px;height:11.5px;background:#fff;box-shadow:inset 1px 1px #696969, inset -1px -1px #e3e3e3;"></div>
<div class="t" style="left:505.75px;top:183.80px;font-size:10.4px;line-height:10.4px;color:#000;font-weight:400;">Permanent</div>
<div class="t" style="left:591.5px;top:183.80px;font-size:10.4px;line-height:10.4px;color:#000;font-weight:400;">Permanent</div>
<div class="a" style="left:399px;top:223px;width:51.75px;height:21px;background:#f0f0f0;box-shadow:inset 1px 1px #fff, inset -1px -1px #696969, inset -2px -2px #a0a0a0;"></div>
<div class="t" style="left:274.875px;width:300px;text-align:center;top:229.00px;font-size:10.4px;line-height:10.4px;color:#000;font-weight:400;">OK</div>
<div class="a" style="left:469px;top:223px;width:51.75px;height:21px;background:#f0f0f0;box-shadow:inset 1px 1px #fff, inset -1px -1px #696969, inset -2px -2px #a0a0a0;"></div>
<div class="t" style="left:344.875px;width:300px;text-align:center;top:229.00px;font-size:10.4px;line-height:10.4px;color:#000;font-weight:400;">Cancel</div>
<div class="a" style="left:543px;top:223px;width:51.75px;height:21px;background:#f0f0f0;box-shadow:inset 1px 1px #fff, inset -1px -1px #696969, inset -2px -2px #a0a0a0;"></div>
<div class="t" style="left:418.875px;width:300px;text-align:center;top:229.00px;font-size:10.4px;line-height:10.4px;color:#000;font-weight:400;">Defaults</div>
<div class="a" style="left:614px;top:223px;width:51.5px;height:21px;background:#f0f0f0;box-shadow:inset 1px 1px #fff, inset -1px -1px #696969, inset -2px -2px #a0a0a0;"></div>
<div class="t" style="left:489.75px;width:300px;text-align:center;top:229.00px;font-size:10.4px;line-height:10.4px;color:#000;font-weight:400;">Clear</div>
</body></html>
